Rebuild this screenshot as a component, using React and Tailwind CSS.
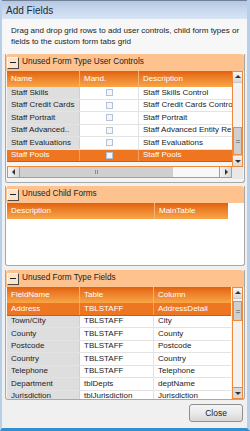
import React from "react";

const font = { fontFamily: '"Liberation Sans", Arial, sans-serif' };

const GroupHeader = ({ title }) => (
  <div className="flex items-center h-[17px] bg-[#fdc28e] rounded-t-[3px] pl-[1px]">
    <div className="w-[12px] h-[12px] bg-[#fbe3cc] border border-[#4a4a4a] border-t-[#f7f7f7] border-l-[#f7f7f7] flex items-center justify-center">
      <div className="w-[6px] h-[1.5px] bg-[#222]" />
    </div>
    <span className="ml-[3px] text-[8.2px] text-[#222]">{title}</span>
  </div>
);

const HeadCell = ({ w, children, last }) => (
  <div
    className={`h-full flex items-center pl-[4px] text-white text-[8px] ${
      last ? "" : "border-r border-[#f3b47a]"
    } ${w}`}
  >
    {children}
  </div>
);

const GridHead = ({ cols }) => (
  <div className="flex h-[16px] bg-gradient-to-b from-[#e2620a] to-[#f8a647]">
    {cols.map((c, i) => (
      <HeadCell key={i} w={c.w} last={i === cols.length - 1}>
        {c.label}
      </HeadCell>
    ))}
  </div>
);

const Check = () => (
  <div className="w-[7px] h-[7px] border border-[#b4c2d6] bg-[#f4f6f9]" />
);

const Arrow = ({ dir }) => {
  const d =
    dir === "up"
      ? "M1 5 L4 2 L7 5 Z"
      : dir === "down"
      ? "M1 3 L4 6 L7 3 Z"
      : dir === "left"
      ? "M5 1 L2 4 L5 7 Z"
      : "M3 1 L6 4 L3 7 Z";
  return (
    <svg width="8" height="8" viewBox="0 0 8 8">
      <path d={d} fill="#333" />
    </svg>
  );
};

const VScroll = ({ h, thumbTop, thumbH, pressed }) => (
  <div
    className="w-[11px] bg-[#f3f3f3] border border-[#f08a3a] flex flex-col"
    style={{ height: h }}
  >
    <div className="h-[11px] bg-gradient-to-b from-[#f4f4f4] to-[#d8d8d8] border-b border-[#c8c8c8] flex items-center justify-center">
      <Arrow dir="up" />
    </div>
    <div className="flex-1 relative">
      <div
        className="absolute left-0 right-0 bg-[#cfcfcf] border border-[#ef8a3a] flex items-center justify-center"
        style={{ top: thumbTop, height: thumbH }}
      >
        <div className="w-[4px] h-[3px] border-t border-b border-[#8d8d8d]" />
      </div>
    </div>
    <div
      className={`h-[11px] border-t flex items-center justify-center ${
        pressed
          ? "bg-[#d9d9d9] border-[#ef8a3a]"
          : "bg-gradient-to-b from-[#f4f4f4] to-[#d8d8d8] border-[#c8c8c8]"
      }`}
    >
      <Arrow dir="down" />
    </div>
  </div>
);

const controls = [
  ["Staff Skills", "Staff Skills Control"],
  ["Staff Credit Cards", "Staff Credit Cards Control"],
  ["Staff Portrait", "Staff Portrait"],
  ["Staff  Advanced..", "Staff Advanced Entity Re"],
  ["Staff Evaluations", "Staff Evaluations"],
  ["Staff Pools", "Staff Pools"],
];

const fields = [
  ["Address", "TBLSTAFF", "AddressDetail"],
  ["Town/City", "TBLSTAFF", "City"],
  ["County", "TBLSTAFF", "County"],
  ["Postcode", "TBLSTAFF", "Postcode"],
  ["Country", "TBLSTAFF", "Country"],
  ["Telephone", "TBLSTAFF", "Telephone"],
  ["Department", "tblDepts", "deptName"],
  ["Jurisdiction", "tblJurisdiction", "Jurisdiction"],
];

const App = () => {
  return (
    <div
      className="w-[250px] h-[431px] bg-[#f0f0f0] border-l-[2px] border-r-[3px] border-b-[3px] border-l-[#b7cfe9] border-r-[#b7cfe9] border-b-[#2f8fd0] flex flex-col overflow-hidden text-[#222]"
      style={font}
    >
      {/* title bar */}
      <div className="shrink-0 h-[19px] bg-gradient-to-b from-[#b4c7e3] via-[#c8d8ee] to-[#d7e4f4] border-t border-[#6e7f96] flex items-center pl-[4px] text-[10px] text-[#1b2a3c]">
        Add Fields
      </div>

      {/* description */}
      <div className="shrink-0 pl-[9px] pr-0 pt-[6px] text-[8px] leading-[11px] text-[#222] h-[35px] bg-[#f7f7f7]">
        Drag and drop grid rows to add user controls, child form types or fields to the custom form tabs grid
      </div>

      {/* group 1 */}
      <div className="shrink-0 ml-[3px] w-[240px] h-[129px] border border-t-0 border-[#a8a8a8] rounded-b-[3px] bg-[#f4f4f4]">
        <GroupHeader title="Unused Form Type User Controls" />
        <div className="flex pl-[1px] pt-0">
          <div className="w-[225px]">
            <GridHead
              cols={[
                { w: "w-[73px]", label: "Name" },
                { w: "w-[59px]", label: "Mand." },
                { w: "w-[93px]", label: "Description" },
              ]}
            />
            {controls.map((r, i) => {
              const sel = i === controls.length - 1;
              return (
                <div
                  key={i}
                  className={`flex h-[12.5px] text-[8px] border-b ${
                    sel
                      ? "bg-[#ee7620] text-white border-[#c95e12]"
                      : "bg-white border-[#e3e3e3]"
                  }`}
                >
                  <div
                    className={`w-[73px] pl-[4px] flex items-center border-r whitespace-nowrap overflow-hidden ${
                      sel ? "border-[#f3a063]" : "bg-[#dedede] border-[#d0d0d0]"
                    }`}
                  >
                    {r[0]}
                  </div>
                  <div
                    className={`w-[59px] flex items-center justify-center border-r ${
                      sel ? "border-[#f3a063]" : "border-[#e3e3e3]"
                    }`}
                  >
                    <Check />
                  </div>
                  <div className="w-[93px] pl-[4px] flex items-center whitespace-nowrap overflow-hidden">
                    {r[1]}
                  </div>
                </div>
              );
            })}
            {/* horizontal scroll */}
            <div className="mt-[4px] h-[12px] flex bg-[#f3f3f3] border border-[#f08a3a]">
              <div className="w-[12px] bg-gradient-to-r from-[#f4f4f4] to-[#dadada] border-r border-[#ef8a3a] flex items-center justify-center">
                <Arrow dir="left" />
              </div>
              <div className="w-[153px] bg-[#cfcfcf] flex items-center justify-center">
                <div className="w-[3px] h-[4px] border-l border-r border-[#8d8d8d]" />
              </div>
              <div className="flex-1 bg-[#f8f8f8]" />
              <div className="w-[12px] bg-gradient-to-r from-[#f4f4f4] to-[#dadada] border-l border-[#ef8a3a] flex items-center justify-center">
                <Arrow dir="right" />
              </div>
            </div>
          </div>
          <div className="flex flex-col">
            <VScroll h={96} thumbTop={44} thumbH={28} />
            <div className="h-[12px] bg-[#e8e8e8]" />
          </div>
        </div>
      </div>

      {/* group 2 */}
      <div className="shrink-0 mt-[3px] ml-[3px] w-[240px] h-[80px] border border-t-0 border-[#a8a8a8] rounded-b-[3px] bg-white flex flex-col">
        <GroupHeader title="Unused Child Forms" />
        <div className="pl-[1px] w-[222px]">
          <GridHead
            cols={[
              { w: "w-[148px]", label: "Description" },
              { w: "w-[73px]", label: "MainTable" },
            ]}
          />
        </div>
      </div>

      {/* group 3 */}
      <div className="shrink-0 mt-[4px] ml-[3px] w-[240px] h-[130px] border border-t-0 border-[#a8a8a8] rounded-b-[3px] bg-[#f4f4f4] overflow-hidden">
        <GroupHeader title="Unused Form Type Fields" />
        <div className="flex pl-[1px]">
          <div className="w-[224px] h-[112px] overflow-hidden">
            <GridHead
              cols={[
                { w: "w-[73px]", label: "FieldName" },
                { w: "w-[74px]", label: "Table" },
                { w: "w-[75px]", label: "Column" },
              ]}
            />
            {fields.map((r, i) => {
              const sel = i === 0;
              return (
                <div
                  key={i}
                  className={`flex h-[12.5px] text-[8px] border-b ${
                    sel
                      ? "bg-[#ee7620] text-white border-[#c95e12]"
                      : "bg-white border-[#e3e3e3]"
                  }`}
                >
                  <div
                    className={`w-[73px] pl-[4px] flex items-center border-r ${
                      sel ? "border-[#f3a063]" : "bg-[#dedede] border-[#d0d0d0]"
                    }`}
                  >
                    {r[0]}
                  </div>
                  <div
                    className={`w-[74px] pl-[4px] flex items-center border-r ${
                      sel ? "border-[#f3a063]" : "border-[#e3e3e3]"
                    }`}
                  >
                    {r[1]}
                  </div>
                  <div className="w-[75px] pl-[4px] flex items-center">{r[2]}</div>
                </div>
              );
            })}
          </div>
          <div className="ml-[1px]">
            <VScroll h={112} thumbTop={2} thumbH={20} pressed />
          </div>
        </div>
      </div>

      {/* footer */}
      <div className="flex-1 flex justify-end items-start pt-[4px] pr-[4px] bg-[#f0f0f0]">
        <button className="w-[54px] h-[18px] rounded-[3px] border border-[#8e8f8f] bg-gradient-to-b from-[#f6f6f6] via-[#eaeaea] to-[#d6d6d6] text-[8.5px] text-[#222]">
          Close
        </button>
      </div>
    </div>
  );
};

export default App;
